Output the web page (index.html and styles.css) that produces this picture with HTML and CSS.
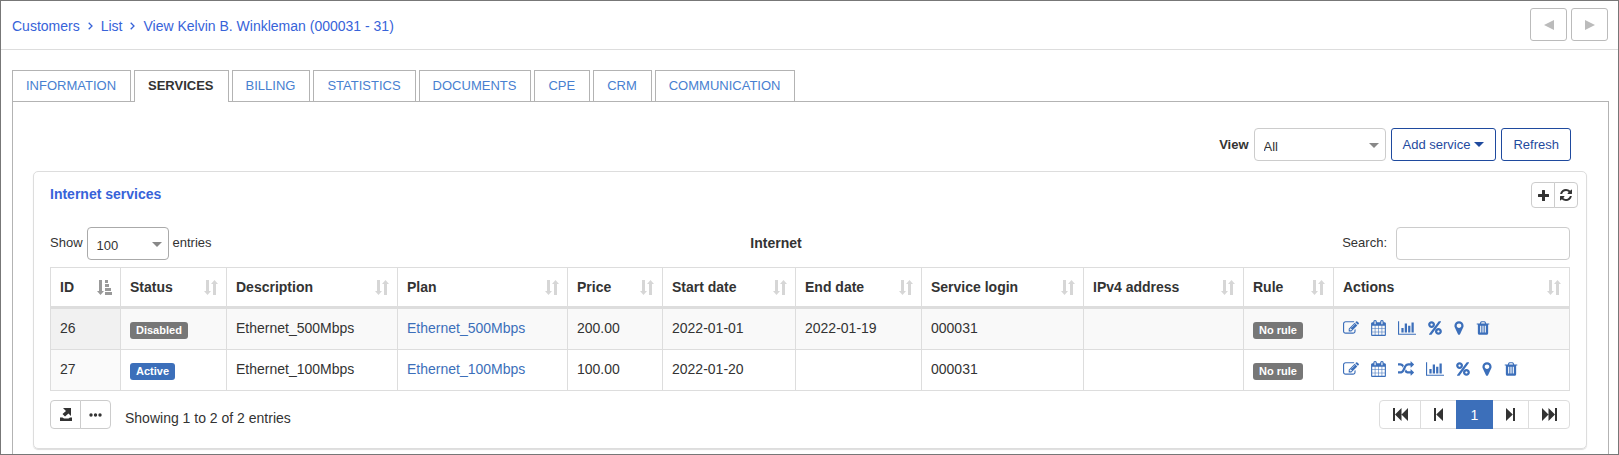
FILE: index.html
```html
<!DOCTYPE html>
<html lang="en">
<head>
<meta charset="utf-8">
<title>Customer services</title>
<link rel="stylesheet" href="styles.css">
</head>
<body>
<svg class="sprite" aria-hidden="true">
  <symbol id="i-edit" viewBox="0 0 1792 1792"><path d="M888 1184l116-116-152-152-116 116v56h96v96h56zm440-720q-16-16-33 1l-350 350q-17 17-1 33t33-1l350-350q17-17 1-33zm80 594v190q0 119-84.5 203.5t-203.5 84.5h-832q-119 0-203.5-84.5t-84.5-203.5v-832q0-119 84.5-203.5t203.5-84.5h832q63 0 117 25 15 7 18 23 3 17-9 29l-49 49q-14 14-32 8-23-6-45-6h-832q-66 0-113 47t-47 113v832q0 66 47 113t113 47h832q66 0 113-47t47-113v-126q0-13 9-22l64-64q15-15 35-7t20 29zm-96-738l288 288-672 672h-288v-288zm444 132l-92 92-288-288 92-92q28-28 68-28t68 28l152 152q28 28 28 68t-28 68z"/></symbol>
  <symbol id="i-calendar" viewBox="64 0 1664 1792"><path d="M192 1664h288v-288h-288v288zm352 0h320v-288h-320v288zm-352-352h288v-320h-288v320zm352 0h320v-320h-320v320zm-352-384h288v-288h-288v288zm736 736h320v-288h-320v288zm-384-736h320v-288h-320v288zm768 736h288v-288h-288v288zm-384-352h320v-320h-320v320zm-352-864v-288q0-13-9.5-22.5t-22.5-9.5h-64q-13 0-22.5 9.5t-9.5 22.5v288q0 13 9.5 22.5t22.5 9.5h64q13 0 22.5-9.5t9.5-22.5zm736 864h288v-320h-288v320zm-384-384h320v-288h-320v288zm384 0h288v-288h-288v288zm32-480v-288q0-13-9.5-22.5t-22.5-9.5h-64q-13 0-22.5 9.5t-9.5 22.5v288q0 13 9.5 22.5t22.5 9.5h64q13 0 22.5-9.5t9.5-22.5zm384-64v1280q0 52-38 90t-90 38h-1408q-52 0-90-38t-38-90v-1280q0-52 38-90t90-38h128v-96q0-66 47-113t113-47h64q66 0 113 47t47 113v96h384v-96q0-66 47-113t113-47h64q66 0 113 47t47 113v96h128q52 0 90 38t38 90z"/></symbol>
  <symbol id="i-random" viewBox="0 0 1792 1792"><path d="M666 481q-60 92-137 273-22-45-37-72.5t-40.5-63.5-51-56.5-63-35-81.5-14.5h-224q-14 0-23-9t-9-23v-192q0-14 9-23t23-9h224q250 0 410 225zm1126 799q0 14-9 23l-320 320q-9 9-23 9-13 0-22.5-9.5t-9.5-22.5v-192q-32 0-85 .5t-81 1-73-1-71-5-64-10.5-63-18.5-58-28.5-59-40-55-53.5-56-69.5q59-93 136-273 22 45 37 72.5t40.5 63.5 51 56.5 63 35 81.5 14.5h256v-192q0-14 9-23t23-9q12 0 24 10l319 319q9 9 9 23zm0-896q0 14-9 23l-320 320q-9 9-23 9-13 0-22.5-9.5t-9.5-22.5v-192h-256q-48 0-87 15t-69 45-51 61.5-45 77.5q-32 62-78 171-29 66-49.5 111t-54 105-64 100-74 83-90 68.5-106.5 42-128 16.5h-224q-14 0-23-9t-9-23v-192q0-14 9-23t23-9h224q48 0 87-15t69-45 51-61.5 45-77.5q32-62 78-171 29-66 49.5-111t54-105 64-100 74-83 90-68.5 106.5-42 128-16.5h256v-192q0-14 9-23t23-9q12 0 24 10l319 319q9 9 9 23z"/></symbol>
  <symbol id="i-chart" viewBox="0 0 2048 1792"><path d="M640 896v512h-256v-512h256zm384-512v1024h-256v-1024h256zm1024 1152v128h-2048v-1536h128v1408h1920zm-640-896v768h-256v-768h256zm384-384v1152h-256v-1152h256z"/></symbol>
  <symbol id="i-percent" viewBox="0 0 1536 1792"><path d="M1280 1280q0-52-38-90t-90-38-90 38-38 90 38 90 90 38 90-38 38-90zm-768-768q0-52-38-90t-90-38-90 38-38 90 38 90 90 38 90-38 38-90zm1024 768q0 159-112.5 271.5t-271.5 112.5-271.5-112.5-112.5-271.5 112.5-271.5 271.5-112.5 271.5 112.5 112.5 271.5zm-96-1088q0 20-13 38l-1056 1408q-19 26-51 26h-160q-26 0-45-19t-19-45q0-20 13-38l1056-1408q19-26 51-26h160q26 0 45 19t19 45zm-672 320q0 159-112.5 271.5t-271.5 112.5-271.5-112.5-112.5-271.5 112.5-271.5 271.5-112.5 271.5 112.5 112.5 271.5z"/></symbol>
  <symbol id="i-marker" viewBox="0 0 1024 1792"><path d="M768 640q0-106-75-181t-181-75-181 75-75 181 75 181 181 75 181-75 75-181zm256 0q0 109-33 179l-364 774q-16 33-47.5 52t-67.5 19-67.5-19-46.5-52l-365-774q-33-70-33-179 0-212 150-362t362-150 362 150 150 362z"/></symbol>
  <symbol id="i-trash" viewBox="192 0 1408 1792"><path d="M704 1376v-704q0-14-9-23t-23-9h-64q-14 0-23 9t-9 23v704q0 14 9 23t23 9h64q14 0 23-9t9-23zm256 0v-704q0-14-9-23t-23-9h-64q-14 0-23 9t-9 23v704q0 14 9 23t23 9h64q14 0 23-9t9-23zm256 0v-704q0-14-9-23t-23-9h-64q-14 0-23 9t-9 23v704q0 14 9 23t23 9h64q14 0 23-9t9-23zm-544-992h448l-48-117q-7-9-17-11h-317q-10 2-17 11zm928 32v64q0 14-9 23t-23 9h-96v948q0 83-47 143.5t-113 60.5h-832q-66 0-113-58.5t-47-141.5v-952h-96q-14 0-23-9t-9-23v-64q0-14 9-23t23-9h309l70-167q15-37 54-63t79-26h320q40 0 79 26t54 63l70 167h309q14 0 23 9t9 23z"/></symbol>
  <symbol id="i-refresh" viewBox="128 128 1536 1536"><path d="M1639 1056q0 5-1 7-64 268-268 434.5t-478 166.5q-146 0-282.5-55t-243.5-157l-129 129q-19 19-45 19t-45-19-19-45v-448q0-26 19-45t45-19h448q26 0 45 19t19 45-19 45l-137 137q71 66 161 102t187 36q134 0 250-65t186-179q11-17 53-117 8-23 30-23h192q13 0 22.5 9.5t9.5 22.5zm25-800v448q0 26-19 45t-45 19h-448q-26 0-45-19t-19-45 19-45l138-138q-148-137-349-137-134 0-250 65t-186 179q-11 17-53 117-8 23-30 23h-199q-13 0-22.5-9.5t-9.5-22.5v-7q65-268 270-434.5t480-166.5q146 0 284 55.5t245 156.5l130-129q19-19 45-19t45 19 19 45z"/></symbol>
  <symbol id="i-plus" viewBox="0 0 11 11"><path d="M4.5 0h2q.5 0 .5.5V4h3.500q.5 0 .5.5v2q0 .5-.5.5H7v3.500q0 .5-.5.5h-2q-.5 0-.5-.5V7H.5Q0 7 0 6.500v-2Q0 4 .5 4H4V.5q0-.5.5-.5z"/></symbol>
  <symbol id="i-sort" viewBox="0 0 14 15"><path d="M2 0h3v11h2L3.500 15 0 11h2zM9 15h3V4h2L10.500 0 7 4h2z"/></symbol>
  <symbol id="i-sort-asc" viewBox="0 0 15 15"><path d="M2 0h3v11h2L3.500 15 0 11h2zM8 0h3v3H8zM8 4h4v3H8zM8 8h6v3H8zM8 12h7v3H8z"/></symbol>
  <symbol id="i-export" viewBox="0 0 12 13"><path d="M3 0h8v8L8.500 5.500 5 8.500 2.500 6 6 3zM0 9.500h2.500L4 10.500h4.500L10 9.500h2V13H0z"/></symbol>
  <symbol id="i-dots" viewBox="0 0 13 4"><circle cx="2" cy="2" r="1.700"/><circle cx="6.500" cy="2" r="1.700"/><circle cx="11" cy="2" r="1.700"/></symbol>
  <symbol id="i-first" viewBox="0 0 15 13"><path d="M0 0h2v13H0zM2 6.500L8.500 0v13zM8.500 6.500L15 0v13z"/></symbol>
  <symbol id="i-prev" viewBox="0 0 9 13"><path d="M0 0h2v13H0zM2.200 6.500L9 0v13z"/></symbol>
  <symbol id="i-next" viewBox="0 0 9 13"><path d="M7 0h2v13H7zM6.800 6.500L0 0v13z"/></symbol>
  <symbol id="i-last" viewBox="0 0 15 13"><path d="M13 0h2v13h-2zM13 6.500L6.500 0v13zM6.500 6.500L0 0v13z"/></symbol>
  <symbol id="i-left" viewBox="0 0 10 10"><path d="M10 0v10L0 5z"/></symbol>
  <symbol id="i-right" viewBox="0 0 10 10"><path d="M0 0v10L10 5z"/></symbol>
  <symbol id="i-chevron" viewBox="0 0 5 8"><path d="M.7.700L4 4 .7 7.300" fill="none" stroke="currentColor" stroke-width="1.300"/></symbol>
</svg>
<div class="page">
  <header class="topbar">
    <nav class="crumbs" aria-label="Breadcrumb">
      <a href="#">Customers</a>
      <svg class="chevron"><use href="#i-chevron"/></svg>
      <a href="#">List</a>
      <svg class="chevron"><use href="#i-chevron"/></svg>
      <a href="#">View Kelvin B. Winkleman (000031 - 31)</a>
    </nav>
    <div class="stepper">
      <button type="button" class="step" aria-label="Previous customer"><svg class="tri"><use href="#i-left"/></svg></button>
      <button type="button" class="step" aria-label="Next customer"><svg class="tri"><use href="#i-right"/></svg></button>
    </div>
  </header>

  <nav class="tabs" aria-label="Customer sections">
    <a class="tab" href="#">INFORMATION</a>
    <a class="tab active" href="#" aria-current="page">SERVICES</a>
    <a class="tab" href="#">BILLING</a>
    <a class="tab" href="#">STATISTICS</a>
    <a class="tab" href="#">DOCUMENTS</a>
    <a class="tab" href="#">CPE</a>
    <a class="tab" href="#">CRM</a>
    <a class="tab" href="#">COMMUNICATION</a>
  </nav>

  <main class="panel">
    <div class="toolbar">
      <label class="view-label" for="view">View</label>
      <span class="select view-select"><select id="view"><option>All</option></select></span>
      <button type="button" class="btn">Add service <span class="caret"></span></button>
      <button type="button" class="btn">Refresh</button>
    </div>

    <section class="card">
      <div class="card-head">
        <h2 class="card-title">Internet services</h2>
        <div class="group">
          <button type="button" class="tool" aria-label="Add"><svg class="plus"><use href="#i-plus"/></svg></button>
          <button type="button" class="tool" aria-label="Reload"><svg class="reload"><use href="#i-refresh"/></svg></button>
        </div>
      </div>

      <div class="filters">
        <div class="length">
          <label for="length">Show</label>
          <span class="select length-select"><select id="length"><option>100</option></select></span>
          <span class="unit">entries</span>
        </div>
        <strong class="caption">Internet</strong>
        <div class="search">
          <label for="search">Search:</label>
          <input id="search" type="search">
        </div>
      </div>

      <table class="grid">
        <colgroup>
          <col class="c-id"><col class="c-status"><col class="c-desc"><col class="c-plan"><col class="c-price"><col class="c-start"><col class="c-end"><col class="c-login"><col class="c-ip"><col class="c-rule"><col class="c-actions">
        </colgroup>
        <thead>
          <tr>
            <th><div class="th">ID <svg class="sort asc"><use href="#i-sort-asc"/></svg></div></th>
            <th><div class="th">Status <svg class="sort"><use href="#i-sort"/></svg></div></th>
            <th><div class="th">Description <svg class="sort"><use href="#i-sort"/></svg></div></th>
            <th><div class="th">Plan <svg class="sort"><use href="#i-sort"/></svg></div></th>
            <th><div class="th">Price <svg class="sort"><use href="#i-sort"/></svg></div></th>
            <th><div class="th">Start date <svg class="sort"><use href="#i-sort"/></svg></div></th>
            <th><div class="th">End date <svg class="sort"><use href="#i-sort"/></svg></div></th>
            <th><div class="th">Service login <svg class="sort"><use href="#i-sort"/></svg></div></th>
            <th><div class="th">IPv4 address <svg class="sort"><use href="#i-sort"/></svg></div></th>
            <th><div class="th">Rule <svg class="sort"><use href="#i-sort"/></svg></div></th>
            <th><div class="th">Actions <svg class="sort"><use href="#i-sort"/></svg></div></th>
          </tr>
        </thead>
        <tbody>
          <tr>
            <td>26</td>
            <td><span class="badge">Disabled</span></td>
            <td>Ethernet_500Mbps</td>
            <td><a href="#">Ethernet_500Mbps</a></td>
            <td>200.00</td>
            <td>2022-01-01</td>
            <td>2022-01-19</td>
            <td>000031</td>
            <td></td>
            <td><span class="badge">No rule</span></td>
            <td>
              <div class="actions">
                <a href="#" aria-label="Edit"><svg class="w16"><use href="#i-edit"/></svg></a>
                <a href="#" aria-label="Calendar"><svg class="w15"><use href="#i-calendar"/></svg></a>
                <a href="#" aria-label="Statistics"><svg class="w18"><use href="#i-chart"/></svg></a>
                <a href="#" aria-label="Discount"><svg class="w14"><use href="#i-percent"/></svg></a>
                <a href="#" aria-label="Location"><svg class="w10"><use href="#i-marker"/></svg></a>
                <a href="#" aria-label="Delete"><svg class="w14"><use href="#i-trash"/></svg></a>
              </div>
            </td>
          </tr>
          <tr>
            <td>27</td>
            <td><span class="badge on">Active</span></td>
            <td>Ethernet_100Mbps</td>
            <td><a href="#">Ethernet_100Mbps</a></td>
            <td>100.00</td>
            <td>2022-01-20</td>
            <td></td>
            <td>000031</td>
            <td></td>
            <td><span class="badge">No rule</span></td>
            <td>
              <div class="actions">
                <a href="#" aria-label="Edit"><svg class="w16"><use href="#i-edit"/></svg></a>
                <a href="#" aria-label="Calendar"><svg class="w15"><use href="#i-calendar"/></svg></a>
                <a href="#" aria-label="Change plan"><svg class="w16"><use href="#i-random"/></svg></a>
                <a href="#" aria-label="Statistics"><svg class="w18"><use href="#i-chart"/></svg></a>
                <a href="#" aria-label="Discount"><svg class="w14"><use href="#i-percent"/></svg></a>
                <a href="#" aria-label="Location"><svg class="w10"><use href="#i-marker"/></svg></a>
                <a href="#" aria-label="Delete"><svg class="w14"><use href="#i-trash"/></svg></a>
              </div>
            </td>
          </tr>
        </tbody>
      </table>

      <div class="card-foot">
        <div class="group">
          <button type="button" class="tool large" aria-label="Export"><svg class="export"><use href="#i-export"/></svg></button>
          <button type="button" class="tool large" aria-label="More"><svg class="dots"><use href="#i-dots"/></svg></button>
        </div>
        <span class="summary">Showing 1 to 2 of 2 entries</span>
        <nav class="pager" aria-label="Pages">
          <a class="wide" href="#" aria-label="First"><svg class="double"><use href="#i-first"/></svg></a>
          <a href="#" aria-label="Previous"><svg class="single"><use href="#i-prev"/></svg></a>
          <a class="current" href="#" aria-current="page">1</a>
          <a href="#" aria-label="Next"><svg class="single"><use href="#i-next"/></svg></a>
          <a class="wide" href="#" aria-label="Last"><svg class="double"><use href="#i-last"/></svg></a>
        </nav>
      </div>
    </section>
  </main>
</div>
</body>
</html>
```
FILE: styles.css
```css
* { box-sizing: border-box; }

body {
  margin: 0;
  background: #fff;
  color: #333;
  font: 14px/20px "Liberation Sans", Arial, sans-serif;
}

a { color: #3c6fba; text-decoration: none; }
svg { display: block; fill: currentColor; }
button, select, input { font: inherit; color: inherit; margin: 0; }
button { cursor: pointer; padding: 0; background: #fff; }

.sprite { position: absolute; width: 0; height: 0; }

.page {
  display: flex;
  flex-direction: column;
  min-height: 100vh;
  border: 1px solid #777;
}

/* Top bar */
.topbar {
  display: flex;
  align-items: center;
  justify-content: space-between;
  padding: 7px 10px 8px 11px;
  border-bottom: 1px solid #ddd;
}
.crumbs { display: flex; align-items: center; gap: 8px; padding-top: 2px; }
.crumbs a, .crumbs .chevron { color: #3763d9; }
.chevron { width: 5px; height: 8px; }
.stepper { display: flex; gap: 4px; }
.step {
  display: grid;
  place-items: center;
  width: 37px;
  height: 33px;
  border: 1px solid #bbb;
  border-radius: 3px;
  color: #bbb;
}
.tri { width: 10px; height: 10px; }

/* Tabs */
.tabs { display: flex; gap: 3px; padding: 20px 11px 0; }
.tab {
  padding: 5px 14px 5px 13px;
  border: 1px solid #b3b3b3;
  border-bottom: 0;
  color: #4880d0;
  font-size: 13px;
}
.tab.active {
  margin-bottom: -1px;
  background: #fff;
  color: #333;
  font-weight: bold;
  z-index: 1;
}

.panel {
  flex: 1;
  margin: 0 9px 0 11px;
  padding: 26px 21px 5px 20px;
  border: 1px solid #b3b3b3;
  border-bottom: 0;
}

/* Toolbar */
.toolbar {
  display: flex;
  align-items: center;
  justify-content: flex-end;
  gap: 5px;
  margin-bottom: 10px;
  padding-right: 16px;
  font-size: 13px;
}
.view-label { font-weight: bold; }
.select { position: relative; display: block; }
.select::after {
  content: "";
  position: absolute;
  top: 15px;
  right: 7px;
  border: solid transparent;
  border-width: 5px 5px 0;
  border-top-color: #888;
  pointer-events: none;
}
.select select {
  display: block;
  width: 100%;
  height: 33px;
  padding: 4px 20px 0 9px;
  appearance: none;
  border: 1px solid #ccc;
  border-radius: 4px;
  background: #fff;
}
.view-select { width: 132px; }
.length-select { width: 82px; }
.length-select select { border-color: #aaa; }
.btn {
  display: flex;
  align-items: center;
  gap: 4px;
  height: 33px;
  padding: 0 11px;
  border: 1px solid #1f4a9e;
  border-radius: 3px;
  color: #1f4a9e;
}
.caret {
  border: solid transparent;
  border-width: 5px 5px 0;
  border-top-color: currentColor;
}

/* Card */
.card {
  padding: 10px 16px 19px;
  border: 1px solid #ddd;
  border-radius: 5px;
  box-shadow: 0 1px 1px #ddd;
}
.card-head {
  display: flex;
  justify-content: space-between;
  margin: 0 -8px 19px 0;
}
.card-title {
  margin: 2px 0 0;
  color: #3763d9;
  font-size: 14px;
  font-weight: bold;
}
.group { display: flex; }
.tool {
  display: grid;
  place-items: center;
  width: 24px;
  height: 26px;
  border: 1px solid #ccc;
}
.tool:first-child { border-radius: 4px 0 0 4px; }
.tool:last-child { margin-left: -1px; border-radius: 0 4px 4px 0; }
.tool.large { width: 31px; height: 29px; }
.plus { width: 11px; height: 11px; }
.reload { width: 12px; height: 12px; }
.export { width: 12px; height: 13px; }
.dots { width: 13px; height: 4px; }

.filters {
  display: grid;
  grid-template-columns: 1fr auto 1fr;
  align-items: center;
  margin-bottom: 7px;
  font-size: 13px;
}
.length { display: flex; align-items: center; gap: 4px; }
.filters label, .unit { padding-bottom: 2px; }
.caption { padding: 0 68px 2px 0; font-size: 14px; }
.search { display: flex; align-items: center; justify-content: flex-end; gap: 9px; }
.search input {
  width: 174px;
  height: 33px;
  padding: 0 8px;
  appearance: none;
  border: 1px solid #ccc;
  border-radius: 4px;
  background: #fff;
}

/* Services table */
.grid { width: 100%; border-collapse: collapse; }
.grid th, .grid td { border: 1px solid #ddd; text-align: left; }
.grid th { padding: 9px 8px 9px 9px; border-bottom-width: 3px; }
.grid td { height: 41px; padding: 0 9px 2px; }
.grid tbody tr:first-child td { height: 42px; }
.grid tbody tr:nth-child(odd) { background: #f9f9f9; }
.grid tbody td:first-child { background: #fafafa; }
.grid tbody tr:nth-child(odd) td:first-child { background: #f1f1f1; }
.th { display: flex; align-items: center; justify-content: space-between; white-space: nowrap; }
.sort { width: 14px; height: 15px; color: #d6d6d6; }
.sort.asc { width: 15px; color: #999; }
.c-id { width: 70px; }
.c-status { width: 106px; }
.c-desc { width: 171px; }
.c-plan { width: 170px; }
.c-price { width: 95px; }
.c-start { width: 133px; }
.c-end { width: 126px; }
.c-login { width: 162px; }
.c-ip { width: 160px; }
.c-rule { width: 90px; }
.c-actions { width: 236px; }

.badge {
  display: block;
  width: fit-content;
  margin-top: 4px;
  padding: 0 6px;
  border-radius: 3px;
  background: #777;
  color: #fff;
  font-size: 11px;
  font-weight: bold;
  line-height: 17px;
}
.badge.on { background: #3c6fba; }

.actions { display: flex; gap: 12px; }
.actions svg { height: 16px; }
.w10 { width: 10px; }
.w14 { width: 14px; }
.w15 { width: 15px; }
.w16 { width: 16px; }
.w18 { width: 18px; }

/* Card footer */
.card-foot { display: flex; align-items: flex-start; padding-top: 9px; }
.summary { margin: 8px 0 0 14px; }
.pager { display: flex; margin-left: auto; }
.pager a {
  display: grid;
  place-items: center;
  width: 37px;
  height: 29px;
  margin-left: -1px;
  border: 1px solid #ddd;
  color: #333;
}
.pager .wide { width: 42px; }
.pager a:first-child { border-radius: 4px 0 0 4px; }
.pager a:last-child { border-radius: 0 4px 4px 0; }
.pager .current { border-color: #3c6fba; background: #3c6fba; color: #fff; z-index: 1; }
.double { width: 15px; height: 13px; }
.single { width: 9px; height: 13px; }
```
